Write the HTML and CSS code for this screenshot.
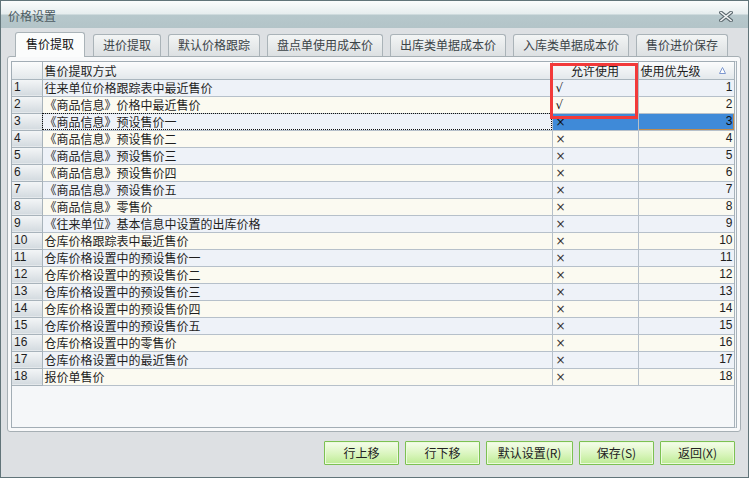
FILE: index.html
```html
<!DOCTYPE html>
<html>
<head>
<meta charset="utf-8">
<link rel="stylesheet" href="styles.css">
</head>
<body>
<div class="window">
  <div class="titlebar">
    <span class="title">价格设置</span>
    <svg class="close" width="14" height="11" viewBox="0 0 14 11">
      <path d="M2 1.5 L12 9.5 M12 1.5 L2 9.5" stroke="#5d6a70" stroke-width="3.6" stroke-linecap="square"/>
      <path d="M2 1.5 L12 9.5 M12 1.5 L2 9.5" stroke="#f4f6f7" stroke-width="1.6" stroke-linecap="square"/>
    </svg>
  </div>
  <div class="body">
    <div class="tabs">
      <div class="tab active">售价提取</div>
      <div class="tab">进价提取</div>
      <div class="tab">默认价格跟踪</div>
      <div class="tab">盘点单使用成本价</div>
      <div class="tab">出库类单据成本价</div>
      <div class="tab">入库类单据成本价</div>
      <div class="tab">售价进价保存</div>
    </div>
    <div class="panel">
      <div class="grid">
        <table>
          <colgroup><col class="c-no"><col class="c-name"><col class="c-allow"><col class="c-pri"></colgroup>
          <thead>
            <tr><th class="no"></th><th class="name">售价提取方式</th><th class="allow">允许使用</th><th class="pri">使用优先级<svg class="sort" width="7" height="7" viewBox="0 0 7 7"><path d="M3.5 0.5 L6.5 6.5 L0.5 6.5 Z" fill="#ffffff" stroke="#7d97cf" stroke-width="1"/></svg></th></tr>
          </thead>
          <tbody>
            <tr class="odd"><td class="no">1</td><td class="name">往来单位价格跟踪表中最近售价</td><td class="allow chk">√</td><td class="pri">1</td></tr>
            <tr class="even"><td class="no">2</td><td class="name">《商品信息》价格中最近售价</td><td class="allow chk">√</td><td class="pri">2</td></tr>
            <tr class="odd sel"><td class="no">3</td><td class="name focus">《商品信息》预设售价一</td><td class="allow">×</td><td class="pri">3</td></tr>
            <tr class="even"><td class="no">4</td><td class="name">《商品信息》预设售价二</td><td class="allow">×</td><td class="pri">4</td></tr>
            <tr class="odd"><td class="no">5</td><td class="name">《商品信息》预设售价三</td><td class="allow">×</td><td class="pri">5</td></tr>
            <tr class="even"><td class="no">6</td><td class="name">《商品信息》预设售价四</td><td class="allow">×</td><td class="pri">6</td></tr>
            <tr class="odd"><td class="no">7</td><td class="name">《商品信息》预设售价五</td><td class="allow">×</td><td class="pri">7</td></tr>
            <tr class="even"><td class="no">8</td><td class="name">《商品信息》零售价</td><td class="allow">×</td><td class="pri">8</td></tr>
            <tr class="odd"><td class="no">9</td><td class="name">《往来单位》基本信息中设置的出库价格</td><td class="allow">×</td><td class="pri">9</td></tr>
            <tr class="even"><td class="no">10</td><td class="name">仓库价格跟踪表中最近售价</td><td class="allow">×</td><td class="pri">10</td></tr>
            <tr class="odd"><td class="no">11</td><td class="name">仓库价格设置中的预设售价一</td><td class="allow">×</td><td class="pri">11</td></tr>
            <tr class="even"><td class="no">12</td><td class="name">仓库价格设置中的预设售价二</td><td class="allow">×</td><td class="pri">12</td></tr>
            <tr class="odd"><td class="no">13</td><td class="name">仓库价格设置中的预设售价三</td><td class="allow">×</td><td class="pri">13</td></tr>
            <tr class="even"><td class="no">14</td><td class="name">仓库价格设置中的预设售价四</td><td class="allow">×</td><td class="pri">14</td></tr>
            <tr class="odd"><td class="no">15</td><td class="name">仓库价格设置中的预设售价五</td><td class="allow">×</td><td class="pri">15</td></tr>
            <tr class="even"><td class="no">16</td><td class="name">仓库价格设置中的零售价</td><td class="allow">×</td><td class="pri">16</td></tr>
            <tr class="odd"><td class="no">17</td><td class="name">仓库价格设置中的最近售价</td><td class="allow">×</td><td class="pri">17</td></tr>
            <tr class="even"><td class="no">18</td><td class="name">报价单售价</td><td class="allow">×</td><td class="pri">18</td></tr>
          </tbody>
        </table>
        <div class="highlight"></div>
      </div>
    </div>
    <div class="buttons">
      <button class="btn">行上移</button>
      <button class="btn">行下移</button>
      <button class="btn wide">默认设置(R)</button>
      <button class="btn">保存(S)</button>
      <button class="btn">返回(X)</button>
    </div>
  </div>
</div>
</body>
</html>
```

FILE: styles.css
```css
* { box-sizing: border-box; }
html, body { margin: 0; padding: 0; }
body {
  font-family: "Noto Sans CJK SC", "Liberation Sans", sans-serif;
  font-size: 12px;
  color: #222;
  background: #dde0e3;
}
.window {
  width: 749px;
  height: 478px;
  border: 1px solid #617479;
  background: #dde0e3;
  display: flex;
  flex-direction: column;
}
.titlebar {
  height: 27px;
  display: flex;
  align-items: center;
  justify-content: space-between;
  padding: 2px 15px 0 7px;
  background: linear-gradient(to bottom, #fbfcfc 0px, #e6edee 13px, #b7c8cc 14px, #b3c4c8 27px);
}
.title {
  color: #4d5c62;
  font-size: 12px;
  line-height: 14px;
}
.close { display: block; margin-top: 2px; }
.body {
  flex: 1;
  display: flex;
  flex-direction: column;
}
.tabs {
  display: flex;
  align-items: flex-end;
  gap: 7px;
  height: 28px;
  padding: 4px 0 0 14px;
  position: relative;
  z-index: 2;
}
.tab {
  height: 22px;
  padding: 0 9px;
  border: 1px solid #aab3b8;
  border-bottom: none;
  border-radius: 3px 3px 0 0;
  background: linear-gradient(to bottom, #f3f5f5, #dce0e2);
  color: #3c4448;
  line-height: 20px;
  font-size: 12px;
  white-space: nowrap;
}
.tab.active {
  height: 25px;
  padding: 0 10px;
  margin-bottom: -1px;
  margin-right: 1px;
  background: #fbfcfc;
  color: #111;
  line-height: 22px;
}
.panel {
  margin-left: 6px;
  width: 734px;
  height: 376px;
  border: 1px solid #a6afb4;
  border-radius: 3px;
  background: #f8f9fa;
  padding: 4px 3px 3px 3px;
  position: relative;
  z-index: 1;
}
.grid {
  position: relative;
  width: 726px;
  height: 367px;
  border: 1px solid #a2adb5;
  border-right: 3px double #a7b2ba;
  background: #f5f7f9;
  overflow: hidden;
}
table {
  border-collapse: collapse;
  table-layout: fixed;
  width: 722px;
  font-size: 12px;
}
col.c-no { width: 30px; }
col.c-name { width: 510px; }
col.c-allow { width: 86px; }
col.c-pri { width: 96px; }
tr { height: 17px; }
th, td {
  padding: 0;
  height: 17px;
  line-height: 15px;
  border: 1px solid #b6c0ca;
  white-space: nowrap;
  overflow: hidden;
  font-weight: normal;
  color: #1e1e1e;
}
thead tr:first-child th { border-top: none; }
tr th:first-child, tr td:first-child { border-left: none; }
th {
  background: linear-gradient(to bottom, #fbfcfc, #e3e8eb);
  border-color: #aab6be;
  text-align: left;
}
th.name { padding-left: 2px; }
th.allow { text-align: center; }
th.pri { padding-left: 2px; position: relative; }
.sort { position: absolute; right: 8px; top: 5px; }
td.no {
  background: linear-gradient(to bottom, #f4f6f7, #d3dadf);
  border-color: #a8b3bb;
  font-family: "Liberation Sans", sans-serif;
  font-size: 12px;
  padding-left: 2px;
}
tr.odd td { background-color: #eef2f8; }
tr.even td { background-color: #fbfaf1; }
tr td.no { background-color: transparent; }
td.name { padding-left: 2px; }
td.allow {
  padding-left: 3px;
  padding-top: 1px;
  font-family: "DejaVu Sans", sans-serif;
  font-size: 12px;
  color: #333;
}
td.chk { font-size: 12px; color: #111; }
td.pri {
  text-align: right;
  padding-right: 1px;
  font-family: "Liberation Sans", sans-serif;
  font-size: 12px;
}
tr.sel td.allow, tr.sel td.pri {
  background-color: #3f8ad8;
  color: #111;
}
tr.sel td.pri { box-shadow: inset -1px -1px 0 #c08a4a; }
td.focus { outline: 1px dotted #111; outline-offset: -1px; }
.highlight {
  position: absolute;
  left: 538px;
  top: 1px;
  width: 88px;
  height: 56px;
  border: 3px solid #f23a3a;
  pointer-events: none;
}
.buttons {
  display: flex;
  justify-content: flex-end;
  gap: 6px;
  padding: 9px 13px 0 0;
}
.btn {
  width: 75px;
  height: 24px;
  border: 1px solid #7cc152;
  border-radius: 1px;
  background: linear-gradient(to bottom, #f6fdec, #d9f5bd 55%, #bdeb94);
  font-family: "Noto Sans CJK SC", sans-serif;
  font-size: 12px;
  color: #222;
  padding: 0;
  line-height: 20px;
  box-shadow: inset 0 0 0 1px #ecfadd;
}
.btn.wide { width: 87px; }
```
